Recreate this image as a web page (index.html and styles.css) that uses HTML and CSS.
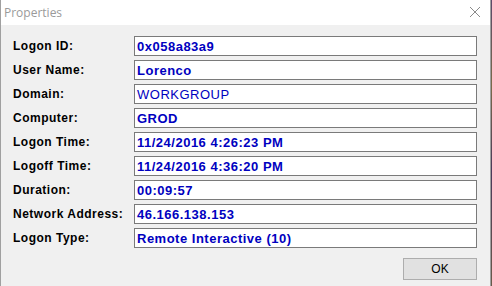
FILE: index.html
```html
<!DOCTYPE html>
<html>
<head>
<meta charset="utf-8">
<link rel="stylesheet" href="styles.css">
</head>
<body>
<div class="desk">
  <div class="window">
    <div class="titlebar">
      <span class="title">Properties</span>
      <svg class="close" width="12" height="12" viewBox="0 0 12 12"><path d="M1 1 L11 11 M11 1 L1 11" stroke="#8a8a8a" stroke-width="1" fill="none"/></svg>
    </div>
    <div class="content">
      <div class="grid">
        <div class="label">Logon ID:</div><div class="field">0x058a83a9</div>
        <div class="label">User Name:</div><div class="field">Lorenco</div>
        <div class="label">Domain:</div><div class="field thin">WORKGROUP</div>
        <div class="label">Computer:</div><div class="field">GROD</div>
        <div class="label">Logon Time:</div><div class="field">11/24/2016 4:26:23 PM</div>
        <div class="label">Logoff Time:</div><div class="field">11/24/2016 4:36:20 PM</div>
        <div class="label">Duration:</div><div class="field">00:09:57</div>
        <div class="label">Network Address:</div><div class="field">46.166.138.153</div>
        <div class="label">Logon Type:</div><div class="field">Remote Interactive (10)</div>
      </div>
      <div class="actions">
        <button class="btn">OK</button>
      </div>
    </div>
  </div>
  <div class="edge"></div>
</div>
</body>
</html>
```
FILE: styles.css
```css
html, body {
  margin: 0;
  padding: 0;
  background: #f0f0f0;
}
.desk {
  display: flex;
  width: 492px;
  height: 286px;
  overflow: hidden;
}
.window {
  width: 489px;
  height: 286px;
  border-left: 1px solid #a0a0a0;
  border-right: 1px solid #a0a0a0;
  background: #f0f0f0;
  display: flex;
  flex-direction: column;
}
.edge {
  width: 1px;
  height: 286px;
  background: linear-gradient(#5a4a6a, #7a6a4a 30%, #4a3a5a 60%, #6a5a4a);
}
.titlebar {
  height: 25px;
  background: #ffffff;
  display: flex;
  align-items: center;
  justify-content: space-between;
  padding: 0 9px 0 3px;
}
.title {
  font-family: "Open Sans", "Noto Sans", sans-serif;
  font-size: 12px;
  color: #9a9a9a;
  margin-top: -1px;
}
.close {
  display: block;
  margin-bottom: 2px;
}
.content {
  padding: 11px 0 0 12px;
  display: flex;
  flex-direction: column;
}
.grid {
  display: grid;
  grid-template-columns: 121px 343px;
  grid-auto-rows: 20px;
  row-gap: 4px;
}
.label {
  font-family: "Liberation Sans", Arial, sans-serif;
  font-weight: bold;
  font-size: 12px;
  letter-spacing: 0.5px;
  color: #000;
  display: flex;
  align-items: center;
}
.field {
  box-sizing: border-box;
  border: 1px solid #7a7a7a;
  background: #fff;
  font-family: "Liberation Sans", Arial, sans-serif;
  font-weight: bold;
  font-size: 13px;
  letter-spacing: 0.5px;
  color: #0000c0;
  display: flex;
  align-items: center;
  padding-left: 2px;
  white-space: nowrap;
}
.field.thin {
  font-weight: normal;
  letter-spacing: 0.5px;
}
.actions {
  display: flex;
  justify-content: flex-end;
  width: 464px;
  margin-top: 10px;
}
.btn {
  width: 74px;
  height: 22px;
  box-sizing: border-box;
  border: 1px solid #adadad;
  background: #e1e1e1;
  font-family: "Liberation Sans", Arial, sans-serif;
  font-size: 12px;
  color: #000;
  padding: 0;
  margin: 0;
}
```
